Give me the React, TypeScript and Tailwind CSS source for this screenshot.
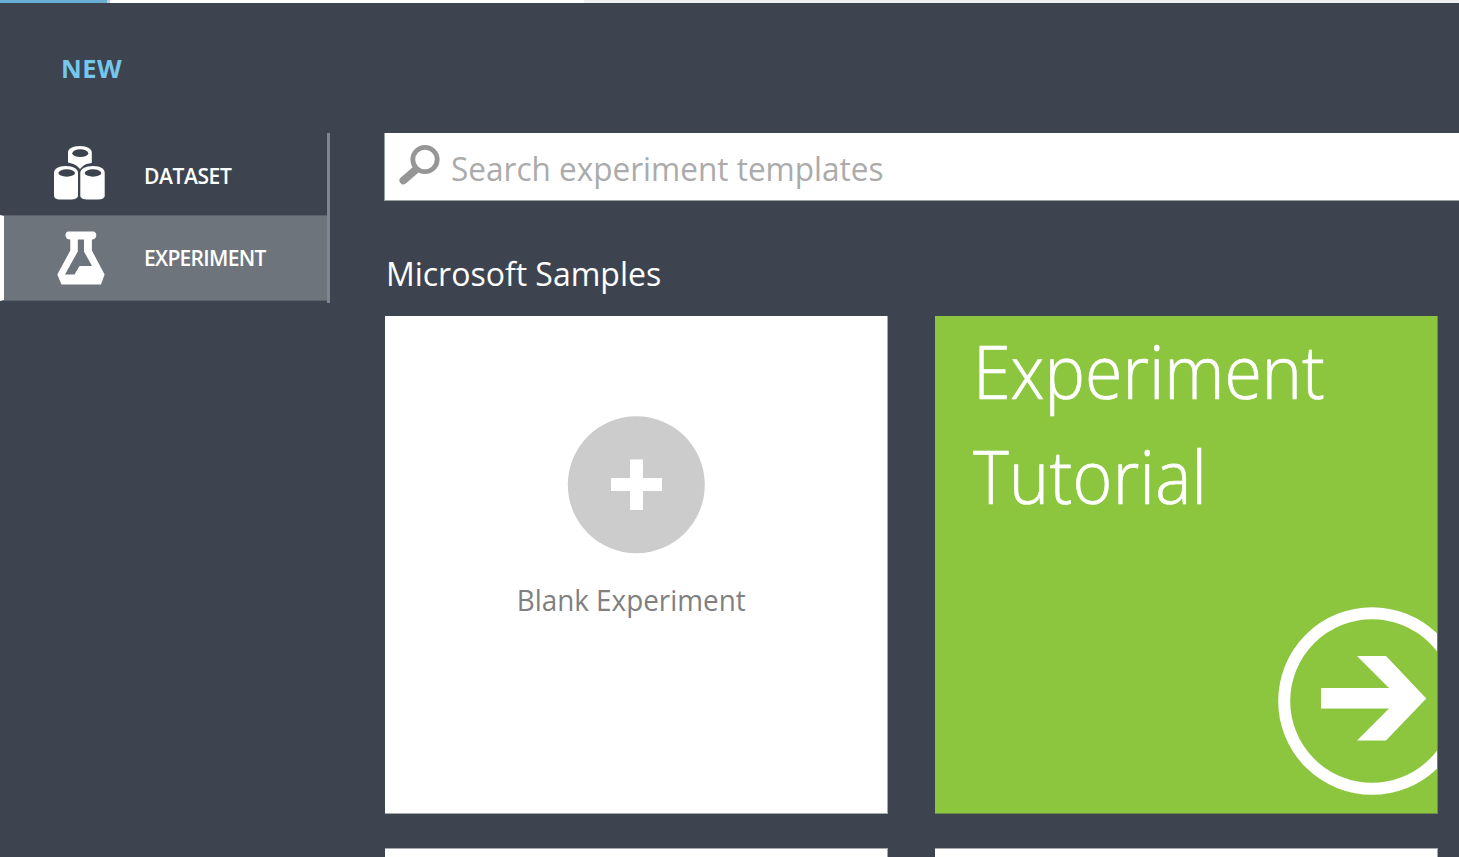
import React from "react";

function DatasetIcon() {
  return (
    <svg className="mb-[2px] h-[56px] w-[54px] shrink-0" viewBox="0 0 54 56">
      <g fill="#fff">
        <path d="M16 7.500C16 4 20 1 27.800 1S39.800 4 39.800 7.500V18C36 18.500 33 19 30.500 21.500L28 24L25.500 21.500C23 19 20 18.500 16 17.500Z" />
        <path d="M2 28C2 24 6 21 13.800 21S26 24 26 28V50.500C26 53 23 54.400 20 54.400H8C4 54.400 2 53 2 50.500Z" />
        <path d="M28.300 28C28.300 24 33 21 41 21S52.700 24 52.700 28V50.500C52.700 53 50 54.400 47 54.400H34.500C31 54.400 28.300 53 28.300 50.500Z" />
      </g>
      <g fill="#3d434e">
        <ellipse cx="28.300" cy="8.200" rx="8" ry="3.900" />
        <ellipse cx="14.700" cy="28" rx="8.300" ry="3.700" />
        <ellipse cx="41" cy="28" rx="8.300" ry="3.700" />
      </g>
    </svg>
  );
}

function FlaskIcon() {
  return (
    <svg className="h-[56px] w-[54px] shrink-0" viewBox="0 0 54 56">
      <path
        fill="#fff"
        fillRule="evenodd"
        d="M16.500 1.500H41C45.500 1.500 45.500 9.200 40.500 9.400H39.900V20.500L52.600 44.500L49 54.500H9.500L5.300 44.500L18.300 20.500V9.400H17.500C12.300 9.200 12.300 1.500 16.500 1.500ZM25.800 9.500V21.500L13 44.500H22.500L27.500 36H40L32 21.500V9.500Z"
      />
    </svg>
  );
}

function SearchIcon() {
  return (
    <svg className="h-[44px] w-[42px] shrink-0" viewBox="0 0 42 44" fill="none" stroke="#969696">
      <circle cx="27" cy="16.500" r="12.200" strokeWidth="4.800" />
      <path d="M17.500 27L5.300 37.500" strokeWidth="7.600" strokeLinecap="round" />
    </svg>
  );
}

function NavItem({ label, icon, active }: { label: string; icon: React.ReactNode; active?: boolean }) {
  return (
    <div
      className={
        active
          ? "flex h-[86px] items-center border-y border-l-[4px] border-y-[#5b626b] border-l-white bg-[#6d747c] pl-[48px]"
          : "flex h-[82px] items-center border-l-[4px] border-transparent pl-[48px]"
      }
    >
      {icon}
      <span
        className={
          active
            ? "ml-[38px] text-[21px] leading-[30px] font-semibold tracking-[-0.7px] text-white"
            : "mt-[3px] ml-[38px] text-[21px] leading-[30px] font-semibold tracking-[-0.4px] text-white"
        }
      >
        {label}
      </span>
    </div>
  );
}

export default function App() {
  return (
    <div className="flex h-[857px] w-[1459px] flex-col overflow-hidden bg-[#3d444f] font-['Open_Sans','Noto_Sans',sans-serif]">
      <div className="flex h-[3px] shrink-0">
        <div className="w-[107px] bg-[#6aaed3]" />
        <div className="w-[3px] bg-[#c5c9cc]" />
        <div className="w-[474px] bg-white" />
        <div className="grow bg-[#efefef]" />
      </div>
      <header className="h-[130px] shrink-0 pt-[47px] pl-[61px]">
        <h1 className="text-[25.500px] leading-[36px] font-bold tracking-[0.5px] text-[#76c7ee]">NEW</h1>
      </header>
      <div className="flex grow">
        <nav className="h-[169.500px] w-[330px] shrink-0 border-r-[3px] border-[#7f858d]">
          <NavItem label="DATASET" icon={<DatasetIcon />} />
          <NavItem label="EXPERIMENT" icon={<FlaskIcon />} active />
        </nav>
        <main className="ml-[54px] w-[1075px] shrink-0">
          <div className="flex h-[68px] border-b border-l border-[#98a0a4] bg-white pt-[10px] pl-[13px]">
            <SearchIcon />
            <span className="ml-[11px] origin-left scale-x-[0.941] text-[33.500px] leading-[50px] whitespace-nowrap text-[#ababab]">
              Search experiment templates
            </span>
          </div>
          <h2 className="mt-[47px] h-[68px] w-[400px] origin-left scale-x-[0.955] pl-[2px] text-[33.500px] leading-[50px] whitespace-nowrap text-white">
            Microsoft Samples
          </h2>
          <div className="grid grid-cols-[503px_503px] gap-x-[47px] gap-y-[34px] pl-px">
            <section className="flex h-[498px] flex-col items-center border-r border-b border-[#a5a9ae] bg-white pt-[100px]">
              <svg className="size-[138px] shrink-0" viewBox="0 0 138 138">
                <circle cx="69.300" cy="68.800" r="68.500" fill="#ccc" />
                <path d="M63 43.500H76V62H95V75H76V94H63V75H44V62H63Z" fill="#fff" />
              </svg>
              <span className="mt-[25px] mr-[10px] scale-x-[0.977] text-[28.500px] leading-[42px] whitespace-nowrap text-[#808080]">
                Blank Experiment
              </span>
            </section>
            <section className="flex h-[498px] flex-col justify-between overflow-hidden border-r border-b border-[#6c8f49] bg-[#8cc63f] pl-[38px]">
              <h3 className="origin-left scale-x-[0.92] pt-[2px] text-[74px] leading-[105px] font-light text-white [-webkit-text-stroke:0.7px_#fff]">
                Experiment
                <br />
                <span className="tracking-[0.3px]">Tutorial</span>
              </h3>
              <svg className="mb-[17px] h-[190px] w-[160px] shrink-0 self-end" viewBox="0 0 160 190">
                <circle cx="95" cy="95" r="87.800" fill="none" stroke="#fff" strokeWidth="12" />
                <path d="M44 82H112L80 50H109L149.300 92.500L109 134.500H80L112 102.500H44Z" fill="#fff" />
              </svg>
            </section>
            <section className="h-[20px] border-t border-r border-[#a5a9ae] bg-white" />
            <section className="h-[20px] border-t border-r border-[#a5a9ae] bg-white" />
          </div>
        </main>
      </div>
    </div>
  );
}
